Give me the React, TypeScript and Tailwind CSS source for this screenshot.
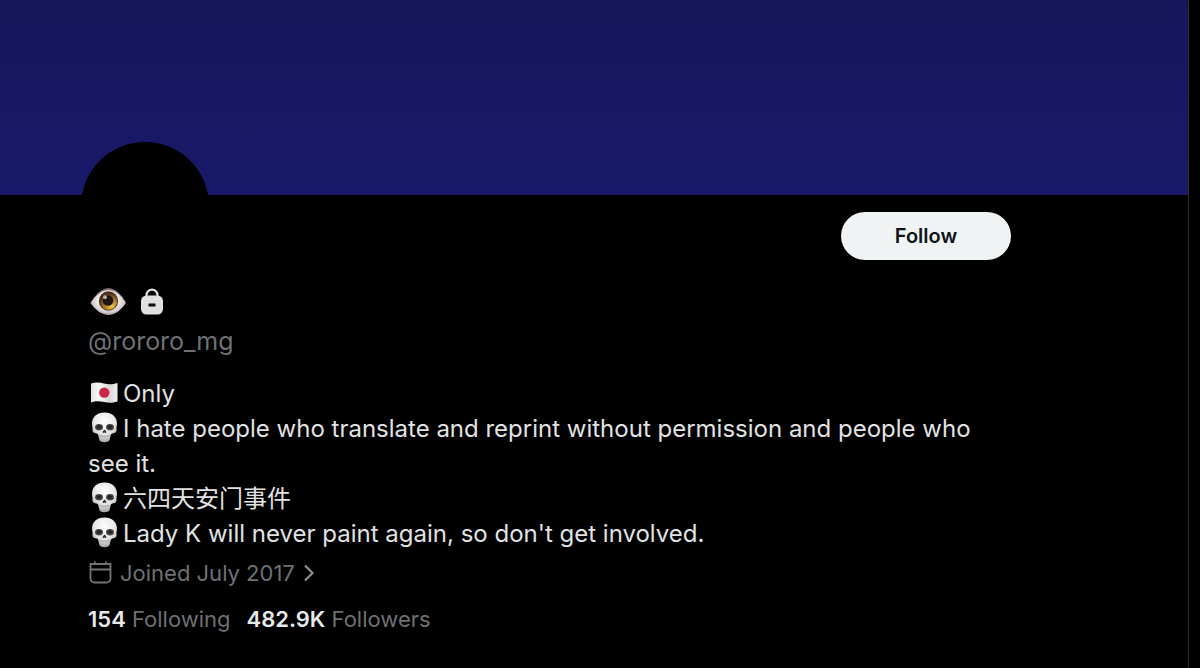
import type { ReactNode } from "react";

function Eye() {
  return (
    <svg viewBox="0 0 38 30" className="h-[30px] w-[38px]" role="img" aria-label="Eye">
      <defs>
        <radialGradient id="eyeWhite" cx="50%" cy="45%" r="55%">
          <stop offset="0.5" stopColor="#f3eeee" />
          <stop offset="0.85" stopColor="#cfc5c6" />
          <stop offset="1" stopColor="#94888b" />
        </radialGradient>
        <radialGradient id="eyeIris" cx="66%" cy="78%" r="72%">
          <stop offset="0" stopColor="#efc552" />
          <stop offset="0.45" stopColor="#b58526" />
          <stop offset="1" stopColor="#49301b" />
        </radialGradient>
      </defs>
      <path d="M1.500 16C6.500 8 12 1.500 19.500 1.500S32.500 8 37 16C32 23 26.500 28 19.500 28S6.500 23 1.500 16Z" fill="url(#eyeWhite)" />
      <path d="M1.500 16C6.500 8 12 1.500 19.500 1.500S32.500 8 37 16C31.500 8 26.500 3 19.500 3S7.500 8 1.500 16Z" fill="#7f6e72" />
      <circle cx="19.500" cy="14" r="9.700" fill="#4a3020" />
      <circle cx="19.500" cy="14" r="8.900" fill="url(#eyeIris)" />
      <circle cx="19" cy="13.500" r="5.300" fill="#211513" />
      <circle cx="16" cy="10.300" r="2" fill="#e9dfd8" opacity="0.750" />
    </svg>
  );
}

function Lock() {
  return (
    <svg viewBox="0 0 24 28" className="h-7 w-6" role="img" aria-label="Protected account">
      <path d="M6.500 9V7.200a5.500 5.500 0 0 1 11 0V9" fill="none" stroke="#e1e1e1" strokeWidth="2.200" />
      <rect x="1" y="7.500" width="22" height="19" rx="5.500" fill="#e1e1e1" />
      <rect x="8.500" y="15.500" width="7" height="3" rx="0.500" fill="#050505" />
    </svg>
  );
}

function Flag() {
  return (
    <svg viewBox="0 0 34 34" className="h-[34px] w-[34px] shrink-0" role="img" aria-label="Japan">
      <defs>
        <linearGradient id="flagCloth">
          <stop offset="0" stopColor="#e2e2e2" />
          <stop offset="0.3" stopColor="#fafafa" />
          <stop offset="0.7" stopColor="#d8d8d8" />
          <stop offset="1" stopColor="#f1f1f1" />
        </linearGradient>
      </defs>
      <path d="M3 7.500C8 5.800 12 6.500 16 7.500s8 1.300 13.500-.5V25.500c-5.500 1.800-9.500 1.500-13.500 .5S8 24.500 3 26.500Z" fill="url(#flagCloth)" />
      <circle cx="16.300" cy="16.600" r="5.200" fill="#cb2547" />
    </svg>
  );
}

function Skull() {
  return (
    <svg viewBox="0 0 34 34" className="h-[34px] w-[34px] shrink-0" role="img" aria-label="Skull">
      <defs>
        <radialGradient id="skullBone" cx="50%" cy="30%" r="70%">
          <stop offset="0" stopColor="#ffffff" />
          <stop offset="0.6" stopColor="#e6e6e7" />
          <stop offset="1" stopColor="#a4a6a9" />
        </radialGradient>
        <radialGradient id="skullSocket" cx="50%" cy="45%" r="55%">
          <stop offset="0.3" stopColor="#232326" />
          <stop offset="1" stopColor="#5c5d60" />
        </radialGradient>
      </defs>
      <path d="M16.500 1.500C9 1.500 4 6 4 12.500c0 2.500.8 3.800.5 5.500-.4 2 .5 3.700 3 4.300 1.800.4 2.700.9 3 2.700l.8 3.600c.5 2 2.200 2.700 5.200 2.700s4.700-.7 5.200-2.700l.8-3.600c.3-1.800 1.200-2.300 3-2.700 2.500-.6 3.400-2.300 3-4.300-.3-1.700.5-3 .5-5.500C29 6 24 1.500 16.500 1.500Z" fill="url(#skullBone)" />
      <ellipse cx="11" cy="16.300" rx="4" ry="3.300" fill="url(#skullSocket)" />
      <ellipse cx="22" cy="16.300" rx="4" ry="3.300" fill="url(#skullSocket)" />
      <path d="M16.500 18.500c-1 .8-2 2.200-1.900 3.100.1.700 1.300.6 1.900 0 .6.600 1.800.7 1.900 0 .1-.9-.9-2.300-1.900-3.100Z" fill="#2f2f32" />
      <path d="M11.500 24.500c3.400 1.100 6.600 1.100 10 0" stroke="#96989b" strokeWidth="0.800" fill="none" />
    </svg>
  );
}

function Calendar() {
  return (
    <svg viewBox="0 0 24 24" className="h-6 w-6" fill="none" stroke="#717477" strokeWidth="1.800" aria-hidden="true">
      <path d="M2.500 3h20v14.500a4 4 0 0 1-4 4h-12a4 4 0 0 1-4-4ZM2.500 8.500h20M7 .5v2.500M18 .5v2.500" />
    </svg>
  );
}

function BioLine({ icon, children }: { icon: ReactNode; children: ReactNode }) {
  return (
    <p>
      <span className="mr-px inline-flex h-[35px] items-start align-top">{icon}</span>
      {children}
    </p>
  );
}

export default function App() {
  return (
    <div className="flex min-h-screen bg-black pr-[11px] font-['Inter','Noto_Sans_CJK_SC',sans-serif] text-[#e1e2e3]">
      <main className="min-w-0 flex-1 border-r border-[#2b2c2e]">
        <div className="h-[195px] bg-linear-to-b from-[#16165a] to-[#19196b]" />
        <div className="flex items-start justify-between pr-[177px] pl-[81px]">
          <div className="-mt-[53px] h-32 w-32 rounded-full bg-black" />
          <button type="button" className="mt-[17px] h-12 w-[170px] rounded-full bg-[#eff3f4] text-xl font-semibold text-[#0f1419]">
            Follow
          </button>
        </div>
        <div className="pr-[177px] pl-[88px]">
          <h1 className="mt-3 flex h-10 items-center gap-[13px] pl-px">
            <Eye />
            <Lock />
          </h1>
          <p className="text-[25px] leading-[38px] text-[#6e7174]">@rororo_mg</p>
          <div className="mt-4 text-2xl leading-[35px]">
            <BioLine icon={<Flag />}>Only</BioLine>
            <BioLine icon={<Skull />}>
              I hate people who translate and reprint without permission and people who see it.
            </BioLine>
            <BioLine icon={<Skull />}>六四天安门事件</BioLine>
            <BioLine icon={<Skull />}>Lady K will never paint again, so don't get involved.</BioLine>
          </div>
          <a href="#joined" className="mt-[6px] flex h-8 w-fit items-center gap-2 text-[22px] text-[#6e7174]">
            <Calendar />
            Joined July 2017
            <svg viewBox="0 0 12 18" className="h-[18px] w-3" fill="none" stroke="#8b8f93" strokeWidth="2.200" aria-hidden="true">
              <path d="M2 1.500 9.500 9 2 16.500" />
            </svg>
          </a>
          <div className="mt-[14px] flex gap-4 text-[22px] leading-8 text-[#6e7174]">
            <a href="#following">
              <strong className="font-semibold text-[#e7e9ea]">154</strong> Following
            </a>
            <a href="#followers">
              <strong className="font-semibold text-[#e7e9ea]">482.9K</strong> Followers
            </a>
          </div>
        </div>
      </main>
    </div>
  );
}
